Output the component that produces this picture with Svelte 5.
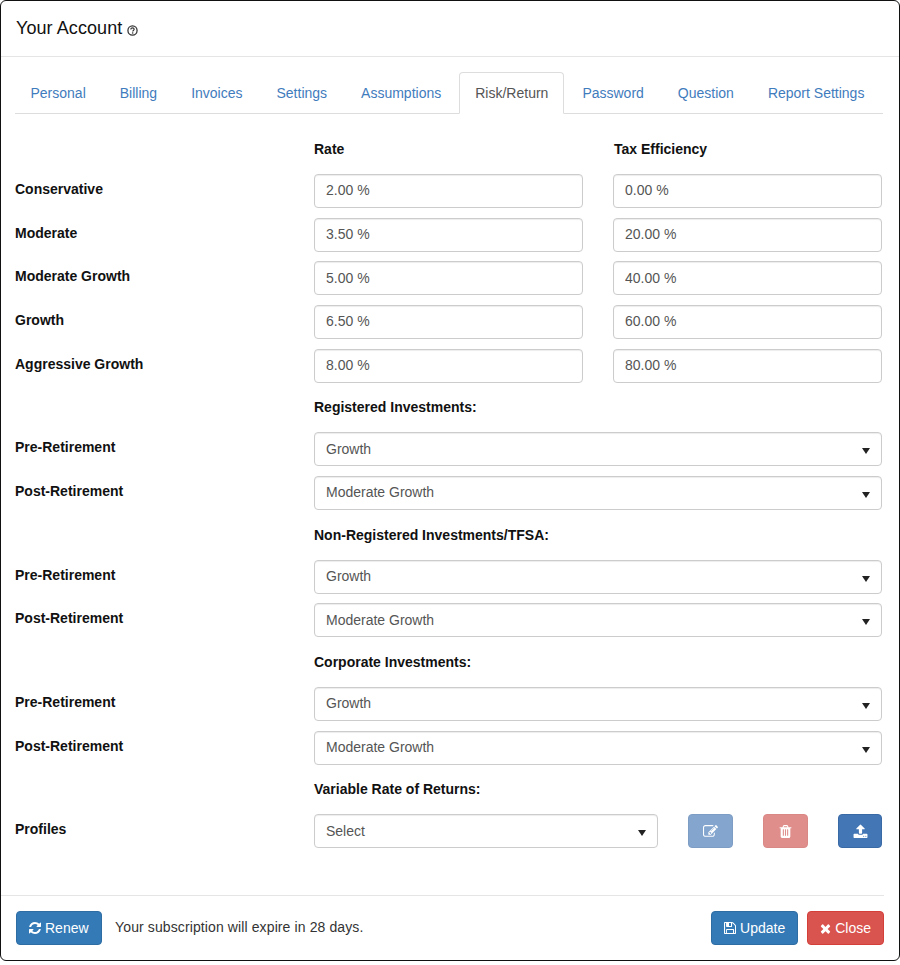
<script>
  const tabs = ['Personal','Billing','Invoices','Settings','Assumptions','Risk/Return','Password','Question','Report Settings'];
  const risks = [['Conservative','2.00 %','0.00 %'],['Moderate','3.50 %','20.00 %'],['Moderate Growth','5.00 %','40.00 %'],['Growth','6.50 %','60.00 %'],['Aggressive Growth','8.00 %','80.00 %']];
  const groups = ['Registered Investments:','Non-Registered Investments/TFSA:','Corporate Investments:'];
</script>

<div class="modal">
  <header class="head">
    <h4>Your Account</h4>
    <svg class="help" viewBox="0 0 12 12" width="11" height="11"><circle cx="6" cy="6" r="5" fill="none" stroke="#333" stroke-width="1.4"/><path d="M4.200 4.800C4.200 3.700 5 3.200 6 3.200s1.800.6 1.800 1.500c0 1.200-1.600 1.200-1.600 2.400" fill="none" stroke="#333" stroke-width="1.300"/><rect x="5.400" y="8" width="1.500" height="1.400" fill="#333"/></svg>
  </header>

  <div class="body">
    <nav class="tabs">
      {#each tabs as t}
        <a href="#t" class="tab" class:active={t === 'Risk/Return'}>{t}</a>
      {/each}
    </nav>

    <div class="row heading first">
      <div class="lab"></div>
      <div class="two"><b>Rate</b><b class="tax">Tax Efficiency</b></div>
    </div>

    <div class="stack">
      {#each risks as r}
        <div class="row">
          <div class="lab">{r[0]}</div>
          <div class="two">
            <input class="ctl" value={r[1]} />
            <input class="ctl" value={r[2]} />
          </div>
        </div>
      {/each}
    </div>

    {#each groups as g}
      <div class="row heading"><div class="lab"></div><b class="gt">{g}</b></div>
      <div class="stack">
        <div class="row"><div class="lab">Pre-Retirement</div><div class="ctl sel">Growth<i class="caret"></i></div></div>
        <div class="row"><div class="lab">Post-Retirement</div><div class="ctl sel">Moderate Growth<i class="caret"></i></div></div>
      </div>
    {/each}

    <div class="row heading"><div class="lab"></div><b class="gt">Variable Rate of Returns:</b></div>
    <div class="row">
      <div class="lab">Profiles</div>
      <div class="profile">
        <div class="ctl sel short">Select<i class="caret"></i></div>
        <button class="ib navy dim" aria-label="Edit">
          <svg viewBox="0 0 1792 1792" width="15" height="15"><path fill="#fff" d="M888 1184l116-116-152-152-116 116v56h96v96h56zm440-720q-16-16-33 1l-350 350q-17 17-1 33t33-1l350-350q17-17 1-33zm80 594v190q0 119-84.500 203.500t-203.500 84.500h-832q-119 0-203.500-84.500t-84.500-203.500v-832q0-119 84.500-203.500t203.500-84.500h832q63 0 117 25 15 7 18 23 3 17-9 29l-49 49q-14 14-32 8-23-6-45-6h-832q-66 0-113 47t-47 113v832q0 66 47 113t113 47h832q66 0 113-47t47-113v-126q0-13 9-22l64-64q15-15 35-7t20 29zm-96-738l288 288-672 672h-288v-288zm444 132l-92 92-288-288 92-92q28-28 68-28t68 28l152 152q28 28 28 68t-28 68z"/></svg>
        </button>
        <button class="ib dred dim" aria-label="Delete">
          <svg viewBox="0 0 1792 1792" width="15" height="15"><path fill="#fff" d="M704 1376v-704q0-14-9-23t-23-9h-64q-14 0-23 9t-9 23v704q0 14 9 23t23 9h64q14 0 23-9t9-23zm256 0v-704q0-14-9-23t-23-9h-64q-14 0-23 9t-9 23v704q0 14 9 23t23 9h64q14 0 23-9t9-23zm256 0v-704q0-14-9-23t-23-9h-64q-14 0-23 9t-9 23v704q0 14 9 23t23 9h64q14 0 23-9t9-23zm-544-992h448l-48-117q-7-9-17-11h-317q-10 2-17 11zm928 32v64q0 14-9 23t-23 9h-96v948q0 83-47 143.500t-113 60.500h-832q-66 0-113-58.500t-47-141.500v-952h-96q-14 0-23-9t-9-23v-64q0-14 9-23t23-9h309l70-167q15-37 54-63t79-26h320q40 0 79 26t54 63l70 167h309q14 0 23 9t9 23z"/></svg>
        </button>
        <button class="ib navy" aria-label="Upload">
          <svg viewBox="0 0 1792 1792" width="15" height="15"><path fill="#fff" d="M1344 1472q0-26-19-45t-45-19-45 19-19 45 19 45 45 19 45-19 19-45zm256 0q0-26-19-45t-45-19-45 19-19 45 19 45 45 19 45-19 19-45zm128-224v320q0 40-28 68t-68 28h-1472q-40 0-68-28t-28-68v-320q0-40 28-68t68-28h427q21 56 70.500 92t110.500 36h256q61 0 110.500-36t70.500-92h427q40 0 68 28t28 68zm-325-648q-17 40-59 40h-256v448q0 26-19 45t-45 19h-256q-26 0-45-19t-19-45v-448h-256q-42 0-59-40-17-39 14-69l448-448q18-19 45-19t45 19l448 448q31 30 14 69z"/></svg>
        </button>
      </div>
    </div>
  </div>

  <footer class="foot">
    <button class="btn blue">
      <svg viewBox="128 128 1536 1536" width="12" height="12"><path fill="#fff" d="M1639 1056q0 5-1 7-64 268-268 434.500t-478 166.500q-146 0-282.500-55t-243.500-157l-129 129q-19 19-45 19t-45-19-19-45v-448q0-26 19-45t45-19h448q26 0 45 19t19 45-19 45l-137 137q71 66 161 102t187 36q134 0 250-65t186-179q11-17 53-117 8-23 30-23h192q13 0 22.500 9.500t9.500 22.500zm25-800v448q0 26-19 45t-45 19h-448q-26 0-45-19t-19-45 19-45l138-138q-148-137-349-137-134 0-250 65t-186 179q-11 17-53 117-8 23-30 23h-199q-13 0-22.500-9.500t-9.500-22.500v-7q65-268 270-434.500t480-166.500q146 0 284 55.500t245 156.500l130-129q19-19 45-19t45 19 19 45z"/></svg>
      Renew
    </button>
    <span class="note">Your subscription will expire in 28 days.</span>
    <span class="spacer"></span>
    <button class="btn blue">
      <svg viewBox="128 128 1536 1536" width="12" height="12"><path fill="#fff" d="M512 1536h768v-384h-768v384zm896 0h128v-896q0-14-10-34t-20-30l-281-281q-10-10-29.500-20t-34.500-10v416q0 40-28 68t-68 28h-576q-40 0-68-28t-28-68v-416h-128v1280h128v-416q0-40 28-68t68-28h832q40 0 68 28t28 68v416zm-384-928v-320q0-13-9.500-22.500t-22.500-9.500h-192q-13 0-22.500 9.500t-9.500 22.500v320q0 13 9.500 22.500t22.500 9.500h192q13 0 22.500-9.500t9.500-22.500zm640 32v928q0 40-28 68t-68 28h-1344q-40 0-68-28t-28-68v-1344q0-40 28-68t68-28h928q40 0 88 20t76 48l280 280q28 28 48 76t20 88z"/></svg>
      Update
    </button>
    <button class="btn red">
      <svg viewBox="192 192 1408 1408" width="11" height="11"><path fill="#fff" d="M1490 1322q0 40-28 68l-136 136q-28 28-68 28t-68-28l-294-294-294 294q-28 28-68 28t-68-28l-136-136q-28-28-28-68t28-68l294-294-294-294q-28-28-28-68t28-68l136-136q28-28 68-28t68 28l294 294 294-294q28-28 68-28t68 28l136 136q28 28 28 68t-28 68l-294 294 294 294q28 28 28 68z"/></svg>
      Close
    </button>
  </footer>
</div>

<style>
  :global(body) { margin: 0; background: #fff; }
  .modal {
    box-sizing: border-box; width: 900px; height: 961px;
    background: #fff; border: 1px solid #111; border-radius: 6px;
    font: 14px/20px "Liberation Sans", Arial, sans-serif; color: #333;
  }
  .head { box-sizing: border-box; height: 56px; border-bottom: 1px solid #e5e5e5; padding: 15px; display: flex; align-items: center; gap: 5px; }
  h4 { margin: 0; font-size: 18px; font-weight: 400; line-height: 25px; color: #111; letter-spacing: .08px; }
  .help { margin-top: 3px; }
  .body { box-sizing: border-box; height: 839px; padding: 15px 0 0 14px; border-bottom: 1px solid #e5e5e5; margin: 0 15px 0 0; }
  .tabs { display: flex; border-bottom: 1px solid #ddd; height: 42px; box-sizing: border-box; margin-right: 1px; }
  .tab { padding: 10px 15px; height: 41px; box-sizing: border-box; border: 1px solid transparent; margin-right: 2px; color: #3f7cbd; text-decoration: none; border-radius: 4px 4px 0 0; white-space: nowrap; }
  .tab:first-child { margin-left: -.5px; }
  .tab.active { color: #555; border-color: #ddd; border-bottom-color: #fff; height: 42px; background: #fff; }
  .row { display: flex; }
  .lab { width: 299px; flex: none; font-weight: 700; color: #111; padding-top: 5px; }
  .two { flex: 1; display: grid; grid-template-columns: 269px 269px; column-gap: 30px; }
  .heading { height: 20px; color: #111; }
  .heading b { font-weight: 700; }
  .heading .lab { padding: 0; }
  .first { margin-top: 25px; margin-bottom: 15px; }
  .tax { padding-left: 1px; }
  .gt { display: block; }
  .stack { display: flex; flex-direction: column; gap: 9.67px; }
  .stack + .heading { margin-top: 14.67px; margin-bottom: 15px; }
  .ctl {
    box-sizing: border-box; height: 34px; width: 100%; margin: 0; border: 1px solid #ccc; border-radius: 4px;
    padding: 5.3px 11px 6.7px; font: inherit; color: #555; background: #fff; box-shadow: inset 0 1px 1px rgba(0,0,0,.075);
  }
  .sel { position: relative; width: 568px; }
  .short { width: 344px; }
  .caret { position: absolute; right: 11px; top: 15px; border: 4px solid transparent; border-top: 6px solid #222; border-bottom: 0; }
  .profile { display: flex; }
  .ib { box-sizing: border-box; width: 45px; height: 34px; border-radius: 4px; border: 1px solid; padding: 0; display: flex; align-items: center; justify-content: center; margin-left: 30px; }
  .profile .ib:last-child { width: 44px; }
  .btn { box-sizing: border-box; height: 34px; border-radius: 4px; border: 1px solid; padding: 6px 12px; font: inherit; display: inline-flex; align-items: center; gap: 4px; }
  .blue { background: #337ab7; border-color: #2e6da4; color: #fff; }
  .red { background: #d9534f; border-color: #d43f3a; color: #fff; }
  .dred { background: #ce5350; border-color: #c64a47; }
  .navy { background: #4276b5; border-color: #3a6aa5; }
  .dim { opacity: .65; }
  .foot { display: flex; align-items: center; height: 64px; padding: 0 15px; box-sizing: border-box; }
  .btn.red { margin-left: 9px; }
  .note { margin: 0 0 2px 13.5px; letter-spacing: .11px; }
  .spacer { flex: 1; }
</style>
